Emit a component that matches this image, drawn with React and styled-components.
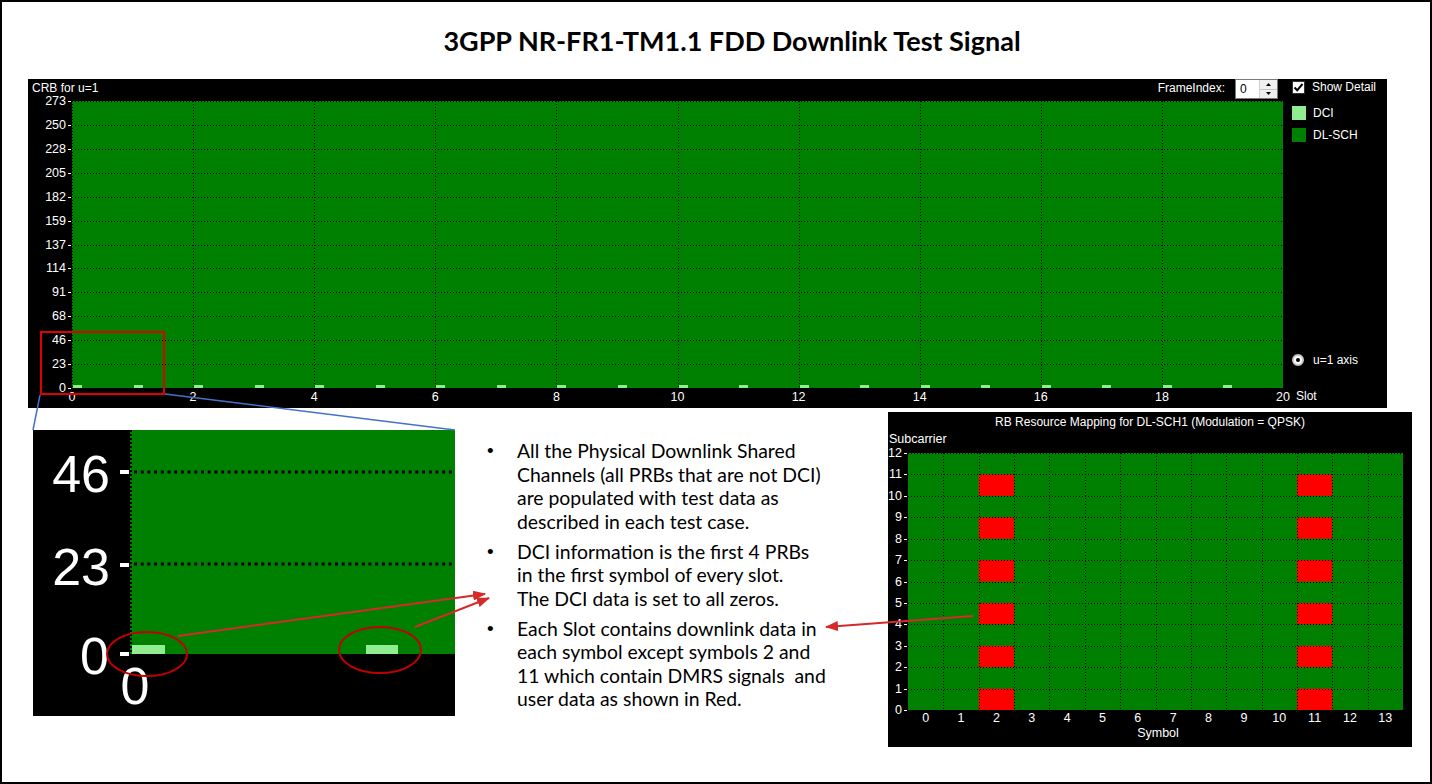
import React from "react";
import styled, { createGlobalStyle } from "styled-components";

const GREEN = "#008000";
const LIGHT = "#90ee90";
const RED = "#ff0000";
const ARROW = "#d42a2a";

const GlobalStyle = createGlobalStyle`
  html, body {
    margin: 0;
    padding: 0;
    background: #fff;
  }
  body {
    font-family: "Liberation Sans", Arial, sans-serif;
  }
`;

const Page = styled.div`
  position: relative;
  width: 1432px;
  height: 784px;
  box-sizing: border-box;
  border: 2px solid #000;
  background: #fff;
  overflow: hidden;
`;

const Title = styled.h1`
  margin: 0;
  height: 77px;
  padding-left: 32px;
  box-sizing: border-box;
  display: flex;
  align-items: center;
  justify-content: center;
  font-family: "Lato", "Liberation Sans", sans-serif;
  font-weight: 700;
  font-size: 27px;
  color: #000;
`;

const TopPanel = styled.div`
  margin-left: 26px;
  width: 1359px;
  height: 329px;
  background: #000;
  display: grid;
  grid-template-columns: 1255px 104px;
  grid-template-rows: 22px 307px;
  color: #fff;
  font-size: 12px;
`;

const PanelHeader = styled.div`
  display: flex;
  justify-content: space-between;
  align-items: flex-start;
  padding: 0 5px 0 4px;
`;

const HeaderLabel = styled.span`
  padding-top: 2px;
  line-height: 14px;
`;

const FrameControl = styled.div`
  display: flex;
  align-items: flex-start;
  gap: 10px;
`;

const Spinner = styled.div`
  width: 43px;
  height: 20px;
  box-sizing: border-box;
  background: #fff;
  border: 1px solid #7a7a7a;
  display: flex;
  justify-content: space-between;
  color: #000;
`;

const SpinValue = styled.span`
  padding: 2px 0 0 4px;
  line-height: 14px;
`;

const SpinButtons = styled.div`
  width: 17px;
  display: flex;
  flex-direction: column;
  border-left: 1px solid #d0d0d0;
`;

const SpinButton = styled.div`
  flex: 1;
  display: flex;
  align-items: center;
  justify-content: center;
  background: #f0f0f0;
  border-bottom: ${(p) => (p.$top ? "1px solid #c8c8c8" : "none")};
`;

const LegendColumn = styled.div`
  grid-column: 2;
  grid-row: 1 / 3;
  display: flex;
  flex-direction: column;
  padding: 0 0 5px 9px;
`;

const LegendItem = styled.div`
  display: flex;
  align-items: center;
  gap: 7px;
  height: 14px;
  margin-top: ${(p) => p.$mt || 0}px;
  line-height: 14px;
`;

const CheckBox = styled.span`
  width: 13px;
  height: 13px;
  box-sizing: border-box;
  background: #fff;
  border: 1px solid #333;
  display: flex;
  align-items: center;
  justify-content: center;
`;

const Swatch = styled.span`
  width: 14px;
  height: 14px;
  background: ${(p) => p.$color};
`;

const Radio = styled.span`
  width: 12px;
  height: 12px;
  box-sizing: border-box;
  border-radius: 50%;
  background: #fff;
  border: 2px solid #c8c8c8;
  display: flex;
  align-items: center;
  justify-content: center;
  margin-right: 2px;

  &::after {
    content: "";
    width: 4px;
    height: 4px;
    border-radius: 50%;
    background: #000;
  }
`;

const Spacer = styled.div`
  flex: ${(p) => p.$size ? `0 0 ${p.$size}px` : 1};
`;

const SlotLabel = styled.span`
  padding-left: 4px;
  line-height: 14px;
`;

const PlotSvg = styled.svg`
  display: block;
  overflow: visible;

  text {
    font-family: "Liberation Sans", Arial, sans-serif;
    font-size: 12.5px;
    fill: #fff;
  }
`;

const BottomRow = styled.div`
  display: flex;
  align-items: flex-start;
  margin-top: 4px;
`;

const Inset = styled.div`
  margin: 18px 0 0 31px;
  width: 422px;
  height: 286px;
  background: #000;
  flex-shrink: 0;
`;

const InsetSvg = styled.svg`
  display: block;

  text {
    font-family: "Liberation Sans", Arial, sans-serif;
    font-size: 52px;
    fill: #fff;
  }
`;

const Notes = styled.ul`
  list-style: none;
  margin: 27px 0 0 32px;
  padding: 0;
  font-family: "Lato", "Liberation Sans", sans-serif;
  font-size: 19.4px;
  line-height: 23.5px;
  color: #000;
`;

const Note = styled.li`
  display: grid;
  grid-template-columns: 30px auto;
  white-space: pre;
  & + & {
    margin-top: 6.5px;
  }

  &::before {
    content: "•";
    font-family: "Liberation Sans", Arial, sans-serif;
    font-size: 19px;
  }
`;

const RightPanel = styled.div`
  margin: 0 18px 0 auto;
  width: 524px;
  height: 335px;
  background: #000;
  flex-shrink: 0;
`;

const RightTitle = styled.div`
  height: 20px;
  line-height: 20px;
  text-align: center;
  color: #fff;
  font-size: 12px;
`;

const Overlay = styled.svg`
  position: absolute;
  top: -2px;
  left: -2px;
  pointer-events: none;
`;

const yVals = [0, 23, 46, 68, 91, 114, 137, 159, 182, 205, 228, 250, 273];

function SlotChart() {
  const x0 = 44;
  const w = 1211;
  const h = 287;
  const slotW = w / 20;
  const evens = Array.from({ length: 11 }, (_, k) => k * 2);
  return (
    <PlotSvg width={1255} height={307}>
      <rect x={x0} y={0} width={w} height={h} fill={GREEN} />
      <line x1={x0 + 0.5} x2={x0 + 0.5} y1={0} y2={h} stroke="#000" strokeDasharray="1 2" />
      {yVals.map((v, i) => {
        const y = Math.round(h - (i * h) / 12);
        return (
          <g key={v}>
            {i > 0 && (
              <line x1={x0} x2={x0 + w} y1={y + 0.5} y2={y + 0.5} stroke="#000" strokeDasharray="1 2" />
            )}
            <line x1={x0 - 4} x2={x0 - 1} y1={y + 0.5} y2={y + 0.5} stroke="#fff" />
            <text x={x0 - 6} y={y} textAnchor="end" dominantBaseline="central">
              {v}
            </text>
          </g>
        );
      })}
      {evens.slice(1, 10).map((k) => {
        const x = Math.round(x0 + k * slotW) + 0.5;
        return <line key={k} x1={x} x2={x} y1={0} y2={h} stroke="#000" strokeDasharray="1 2" />;
      })}
      {Array.from({ length: 20 }, (_, s) => (
        <rect key={s} x={Math.round(x0 + s * slotW) + 1} y={h - 3} width={9} height={3} fill={LIGHT} />
      ))}
      {evens.map((k) => (
        <text key={k} x={x0 + k * slotW} y={296} textAnchor="middle" dominantBaseline="central">
          {k}
        </text>
      ))}
    </PlotSvg>
  );
}

function InsetZoom() {
  return (
    <InsetSvg width={422} height={286}>
      <rect x={97} y={0} width={325} height={224} fill={GREEN} />
      <line x1={98} x2={98} y1={0} y2={224} stroke="#000" strokeWidth={2} strokeDasharray="2 2" />
      {[42, 134].map((y) => (
        <line key={y} x1={101} x2={422} y1={y} y2={y} stroke="#000" strokeWidth={3} strokeDasharray="3 3.7" />
      ))}
      {[42, 135, 224].map((y) => (
        <rect key={y} x={87} y={y - 2} width={9} height={4} fill="#fff" />
      ))}
      <text x={77} y={44} textAnchor="end" dominantBaseline="central">46</text>
      <text x={77} y={137} textAnchor="end" dominantBaseline="central">23</text>
      <text x={76} y={226} textAnchor="end" dominantBaseline="central">0</text>
      <text x={102} y={256} textAnchor="middle" dominantBaseline="central">0</text>
      <rect x={99} y={215} width={33} height={9} fill={LIGHT} />
      <rect x={333} y={215} width={32} height={9} fill={LIGHT} />
    </InsetSvg>
  );
}

function SymbolChart() {
  const x0 = 20;
  const y0 = 21;
  const w = 495;
  const h = 257;
  const cw = w / 14;
  const rh = h / 12;
  const redCols = [2, 11];
  const redRows = [0, 2, 4, 6, 8, 10];
  return (
    <PlotSvg width={524} height={315}>
      <text x={1} y={7} dominantBaseline="central">Subcarrier</text>
      <rect x={x0} y={y0} width={w} height={h} fill={GREEN} />
      {redCols.map((c) =>
        redRows.map((r) => (
          <rect
            key={`${c}-${r}`}
            x={x0 + c * cw}
            y={y0 + h - (r + 1) * rh}
            width={cw}
            height={rh}
            fill={RED}
          />
        ))
      )}
      {Array.from({ length: 13 }, (_, i) => {
        const y = Math.round(y0 + h - i * rh);
        return (
          <g key={i}>
            {i > 0 && (
              <line x1={x0} x2={x0 + w} y1={y + 0.5} y2={y + 0.5} stroke="#000" strokeDasharray="1 2" />
            )}
            <line x1={x0 - 4} x2={x0 - 1} y1={y + 0.5} y2={y + 0.5} stroke="#fff" />
            <text x={x0 - 6} y={y} textAnchor="end" dominantBaseline="central">
              {i}
            </text>
          </g>
        );
      })}
      {Array.from({ length: 13 }, (_, i) => {
        const x = Math.round(x0 + (i + 1) * cw) + 0.5;
        return <line key={i} x1={x} x2={x} y1={y0} y2={y0 + h} stroke="#000" strokeDasharray="1 2" />;
      })}
      {Array.from({ length: 14 }, (_, i) => (
        <text key={i} x={x0 + (i + 0.5) * cw} y={286} textAnchor="middle" dominantBaseline="central">
          {i}
        </text>
      ))}
      <text x={270} y={301} textAnchor="middle" dominantBaseline="central">Symbol</text>
    </PlotSvg>
  );
}

function Annotations() {
  return (
    <Overlay width={1432} height={784} viewBox="0 0 1432 784">
      <defs>
        <marker
          id="arrowHead"
          markerWidth="13"
          markerHeight="10"
          refX="12"
          refY="5"
          orient="auto"
          markerUnits="userSpaceOnUse"
        >
          <path d="M0,0 L13,5 L0,10 z" fill={ARROW} />
        </marker>
      </defs>
      <rect x={41} y={332} width={123} height={62} fill="none" stroke="#e00000" strokeWidth={2} />
      <line x1={40} y1={395} x2={33} y2={430} stroke="#4472c4" strokeWidth={1.5} />
      <line x1={165} y1={394} x2={455} y2={430} stroke="#4472c4" strokeWidth={1.5} />
      <ellipse cx={147} cy={654} rx={40} ry={22} fill="none" stroke="#c00000" strokeWidth={2} />
      <ellipse cx={380} cy={650} rx={41} ry={23} fill="none" stroke="#c00000" strokeWidth={2} />
      <line x1={178} y1={636} x2={485} y2={594} stroke={ARROW} strokeWidth={2} markerEnd="url(#arrowHead)" />
      <line x1={415} y1={627} x2={489} y2={598} stroke={ARROW} strokeWidth={2} markerEnd="url(#arrowHead)" />
      <line x1={973} y1={616} x2={826} y2={627} stroke={ARROW} strokeWidth={2} markerEnd="url(#arrowHead)" />
    </Overlay>
  );
}

const notes = [
  [
    "All the Physical Downlink Shared",
    "Channels (all PRBs that are not DCI)",
    "are populated with test data as",
    "described in each test case.",
  ],
  [
    "DCI information is the first 4 PRBs",
    "in the first symbol of every slot.",
    "The DCI data is set to all zeros.",
  ],
  [
    "Each Slot contains downlink data in",
    "each symbol except symbols 2 and",
    "11 which contain DMRS signals  and",
    "user data as shown in Red.",
  ],
];

export default function App() {
  return (
    <>
      <GlobalStyle />
      <Page>
        <Title>3GPP NR-FR1-TM1.1 FDD Downlink Test Signal</Title>
        <TopPanel>
          <PanelHeader>
            <HeaderLabel>CRB for u=1</HeaderLabel>
            <FrameControl>
              <HeaderLabel>FrameIndex:</HeaderLabel>
              <Spinner>
                <SpinValue>0</SpinValue>
                <SpinButtons>
                  <SpinButton $top>
                    <svg width="5" height="3" viewBox="0 0 5 3">
                      <path d="M0 3 L2.5 0 L5 3 z" fill="#000" />
                    </svg>
                  </SpinButton>
                  <SpinButton>
                    <svg width="5" height="3" viewBox="0 0 5 3">
                      <path d="M0 0 L2.5 3 L5 0 z" fill="#000" />
                    </svg>
                  </SpinButton>
                </SpinButtons>
              </Spinner>
            </FrameControl>
          </PanelHeader>
          <LegendColumn>
            <LegendItem $mt={1}>
              <CheckBox>
                <svg width="11" height="11" viewBox="0 0 11 11">
                  <path d="M1.5 5.5 L4.2 8.3 L9.5 2" fill="none" stroke="#000" strokeWidth="2" />
                </svg>
              </CheckBox>
              Show Detail
            </LegendItem>
            <LegendItem $mt={12}>
              <Swatch $color={LIGHT} />
              DCI
            </LegendItem>
            <LegendItem $mt={8}>
              <Swatch $color={GREEN} />
              DL-SCH
            </LegendItem>
            <Spacer />
            <LegendItem>
              <Radio />
              u=1 axis
            </LegendItem>
            <Spacer $size={22} />
            <SlotLabel>Slot</SlotLabel>
          </LegendColumn>
          <SlotChart />
        </TopPanel>
        <BottomRow>
          <Inset>
            <InsetZoom />
          </Inset>
          <Notes>
            {notes.map((lines, i) => (
              <Note key={i}>
                <span>{lines.join("\n")}</span>
              </Note>
            ))}
          </Notes>
          <RightPanel>
            <RightTitle>RB Resource Mapping for DL-SCH1 (Modulation = QPSK)</RightTitle>
            <SymbolChart />
          </RightPanel>
        </BottomRow>
        <Annotations />
      </Page>
    </>
  );
}
